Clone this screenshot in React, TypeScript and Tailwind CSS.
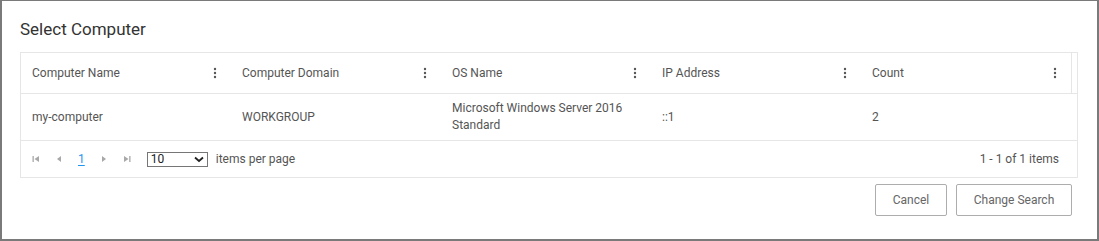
import React from "react";

const columns = ["Computer Name", "Computer Domain", "OS Name", "IP Address", "Count"];

const rows = [
  ["my-computer", "WORKGROUP", "Microsoft Windows Server 2016 Standard", "::1", "2"],
];

function Kebab() {
  return (
    <svg width="4" height="14" viewBox="0 0 4 14" className="text-[#555]">
      <circle cx="2" cy="3" r="1.2" fill="currentColor" />
      <circle cx="2" cy="7" r="1.2" fill="currentColor" />
      <circle cx="2" cy="11" r="1.2" fill="currentColor" />
    </svg>
  );
}

function PagerIcon({ kind }: { kind: "first" | "prev" | "next" | "last" }) {
  return (
    <svg width="10" height="10" viewBox="0 0 10 10" className="text-[#a8a8a8]">
      {kind === "first" && (
        <>
          <rect x="1.5" y="2" width="1.3" height="6" fill="currentColor" />
          <polygon points="8,2 8,8 3.5,5" fill="currentColor" />
        </>
      )}
      {kind === "prev" && <polygon points="7,2 7,8 3,5" fill="currentColor" />}
      {kind === "next" && <polygon points="3,2 3,8 7,5" fill="currentColor" />}
      {kind === "last" && (
        <>
          <polygon points="2,2 2,8 6.5,5" fill="currentColor" />
          <rect x="7.2" y="2" width="1.3" height="6" fill="currentColor" />
        </>
      )}
    </svg>
  );
}

export default function App() {
  return (
    <div
      className="w-[1099px] h-[241px] bg-white border-[#7a7a7a] border-t border-l-2 border-r-2 border-b-2 text-[#555]"
      style={{ fontFamily: "Roboto, 'Noto Sans', sans-serif" }}
    >
      <div className="pl-[18px] pr-[19px]">
        <h1 className="text-[17px] text-[#333] h-[51px] pt-[17px] leading-[22px]">Select Computer</h1>

        <div className="border border-[#e6e6e6]">
          {/* header */}
          <div className="flex h-[41px] border-b border-[#e6e6e6]">
            {columns.map((c) => (
              <div key={c} className="w-[210px] flex items-center justify-between pl-[11px] pr-[14px] text-[12px]">
                <span>{c}</span>
                <Kebab />
              </div>
            ))}
            <div className="flex-1 border-l border-[#e6e6e6]" />
          </div>

          {/* body */}
          {rows.map((r, i) => (
            <div key={i} className="flex h-[47px] border-b border-[#e6e6e6] text-[12px]">
              {r.map((cell, j) => (
                <div key={j} className="w-[210px] flex items-center pl-[11px] pr-[18px] leading-[17px]">
                  {cell}
                </div>
              ))}
            </div>
          ))}

          {/* pager */}
          <div className="flex items-center h-[36px] pl-[10px] pr-[18px] text-[12px]">
            <div className="flex items-center gap-[13px]">
              <PagerIcon kind="first" />
              <PagerIcon kind="prev" />
              <span className="text-[#1e96f0] underline underline-offset-2 px-[1px]">1</span>
              <PagerIcon kind="next" />
              <PagerIcon kind="last" />
            </div>
            <div className="ml-[15px] flex items-center w-[61px] h-[15px] border border-[#767676] px-[3px] justify-between">
              <span className="text-[12px] leading-none text-[#222]">10</span>
              <svg width="10" height="7" viewBox="0 0 10 7">
                <path d="M1 1.5 L5 5 L9 1.5" stroke="#222" strokeWidth="1.8" fill="none" />
              </svg>
            </div>
            <span className="ml-[8px]">items per page</span>
            <span className="ml-auto">1 - 1 of 1 items</span>
          </div>
        </div>

        <div className="flex justify-end gap-[9px] pt-[6px] pr-[6px]">
          <button className="w-[72px] h-[32px] border border-[#adadad] rounded-[2px] text-[12px] text-[#666]">Cancel</button>
          <button className="w-[116px] h-[32px] border border-[#adadad] rounded-[2px] text-[12px] text-[#666]">Change Search</button>
        </div>
      </div>
    </div>
  );
}
